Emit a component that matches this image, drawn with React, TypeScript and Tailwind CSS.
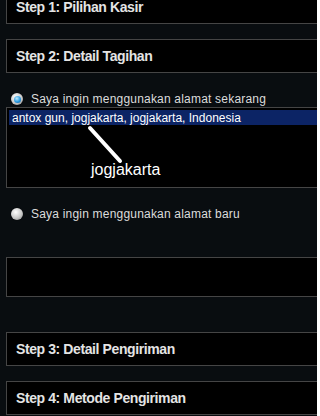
import React from "react";

const arial = { fontFamily: '"Liberation Sans", Arial, sans-serif' };

function StepBox({ title, className = "" }: { title: string; className?: string }) {
  return (
    <div
      className={`w-[330px] h-[34px] border border-[#454545] bg-black flex items-center pl-[9px] ${className}`}
    >
      <span className="text-[14px] font-bold tracking-[-0.4px] text-[#e4e4e4] leading-none">{title}</span>
    </div>
  );
}

function Radio({ checked }: { checked?: boolean }) {
  return (
    <span className="w-[12px] h-[12px] rounded-full flex items-center justify-center bg-[radial-gradient(circle_at_40%_35%,#ffffff,#c8c8c8_55%,#7a7a7a)] shadow-[0_0_1px_#000]">
      {checked && (
        <span className="w-[7px] h-[7px] rounded-full bg-[radial-gradient(circle_at_40%_35%,#bfeaff,#2a9be0_55%,#0b4f92)]" />
      )}
    </span>
  );
}

export default function App() {
  return (
    <div className="w-[317px] h-[416px] overflow-hidden bg-[#090d10] pl-[6px]" style={arial}>
      <StepBox title="Step 1: Pilihan Kasir" className="-mt-[10px] h-[33px]" />
      <StepBox title="Step 2: Detail Tagihan" className="mt-[15px]" />

      <div className="mt-[19px] flex items-center h-[14px] pl-[5px] gap-[8px]">
        <Radio checked />
        <span className="text-[12px] tracking-[0.2px] text-[#dcdcdc] leading-none">
          Saya ingin menggunakan alamat sekarang
        </span>
      </div>

      <div className="relative mt-[1px] w-[330px] h-[81px] border border-[#454545] bg-black pt-[2px] pl-[2px]">
        <div className="h-[15px] bg-[#0c2465] flex items-center pl-[3px]">
          <span className="text-[12px] text-white leading-none">antox gun, jogjakarta, jogjakarta, Indonesia</span>
        </div>
        <svg className="absolute left-[77px] top-[14px]" width="40" height="42" viewBox="0 0 40 42">
          <line x1="6" y1="6" x2="36" y2="39" stroke="#ffffff" strokeWidth="4" strokeLinecap="round" />
        </svg>
        <span className="absolute left-[84px] top-[54px] text-[16px] text-white leading-none">jogjakarta</span>
      </div>

      <div className="mt-[20px] flex items-center h-[12px] pl-[5px] gap-[8px]">
        <Radio />
        <span className="text-[12px] tracking-[0.2px] text-[#dcdcdc] leading-none">
          Saya ingin menggunakan alamat baru
        </span>
      </div>

      <div className="mt-[37px] w-[330px] h-[40px] border border-[#454545] bg-black" />

      <StepBox title="Step 3: Detail Pengiriman" className="mt-[35px]" />
      <StepBox title="Step 4: Metode Pengiriman" className="mt-[15px]" />
    </div>
  );
}
